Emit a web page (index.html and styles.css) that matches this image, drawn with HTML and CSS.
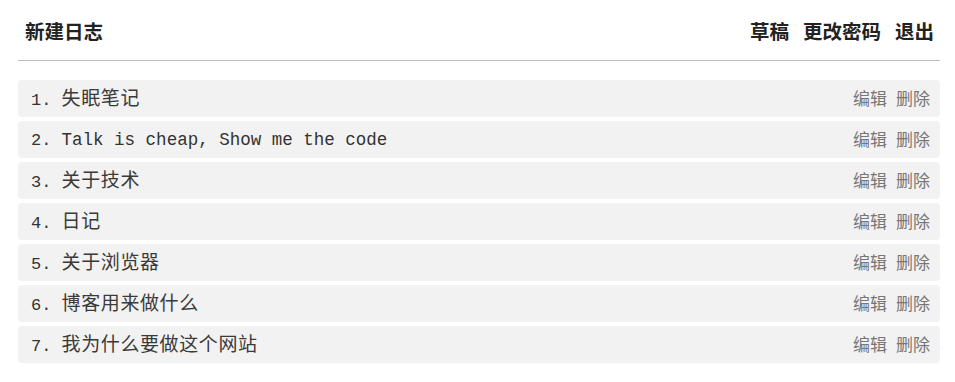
FILE: index.html
```html
<!DOCTYPE html>
<html lang="zh-CN">
<head>
<meta charset="utf-8">
<title>日志</title>
<link rel="stylesheet" href="styles.css">
</head>
<body>
<div class="page">
  <header class="top">
    <a class="top-link">新建日志</a>
    <nav class="top-nav">
      <a class="top-link">草稿</a>
      <a class="top-link">更改密码</a>
      <a class="top-link">退出</a>
    </nav>
  </header>
  <ul class="list">
    <li class="row"><span class="title"><span class="num">1. </span><span class="cn">失眠笔记</span></span><span class="ops"><a>编辑</a><a>删除</a></span></li>
    <li class="row"><span class="title"><span class="num">2. </span><span class="mono">Talk is cheap, Show me the code</span></span><span class="ops"><a>编辑</a><a>删除</a></span></li>
    <li class="row"><span class="title"><span class="num">3. </span><span class="cn">关于技术</span></span><span class="ops"><a>编辑</a><a>删除</a></span></li>
    <li class="row"><span class="title"><span class="num">4. </span><span class="cn">日记</span></span><span class="ops"><a>编辑</a><a>删除</a></span></li>
    <li class="row"><span class="title"><span class="num">5. </span><span class="cn">关于浏览器</span></span><span class="ops"><a>编辑</a><a>删除</a></span></li>
    <li class="row"><span class="title"><span class="num">6. </span><span class="cn">博客用来做什么</span></span><span class="ops"><a>编辑</a><a>删除</a></span></li>
    <li class="row"><span class="title"><span class="num">7. </span><span class="cn">我为什么要做这个网站</span></span><span class="ops"><a>编辑</a><a>删除</a></span></li>
  </ul>
</div>
</body>
</html>
```
FILE: styles.css
```css
html, body {
  margin: 0;
  padding: 0;
  background: #fff;
}
body {
  font-family: "Noto Sans CJK SC", sans-serif;
  color: #333;
}
.page {
  width: 922px;
  margin-left: 18px;
}
.top {
  height: 61px;
  box-sizing: border-box;
  padding: 2px 6px 0 7px;
  display: flex;
  align-items: center;
  justify-content: space-between;
  border-bottom: 1px solid #bdbdbd;
}
.top-link {
  font-size: 19.5px;
  font-weight: 700;
  color: #222;
  line-height: 1;
}
.top-nav {
  display: flex;
  gap: 14px;
}
.list {
  list-style: none;
  margin: 19px 0 0 0;
  padding: 0;
  display: flex;
  flex-direction: column;
  gap: 4px;
}
.row {
  height: 37px;
  box-sizing: border-box;
  background: #f2f2f2;
  border-radius: 4px;
  padding: 0 10px 3px 13px;
  display: flex;
  align-items: center;
  justify-content: space-between;
}
.title {
  display: block;
  white-space: pre;
  line-height: 28px;
  height: 28px;
}
.num {
  font-family: "Liberation Mono", monospace;
  font-size: 17px;
  color: #333;
}
.mono {
  font-family: "Liberation Mono", monospace;
  font-size: 17.5px;
  color: #333;
}
.cn {
  font-family: "Noto Sans CJK SC", sans-serif;
  font-size: 19px;
  color: #3a3a3a;
  letter-spacing: 0.6px;
}
.ops {
  display: flex;
  gap: 9px;
}
.ops a {
  font-size: 17px;
  color: #777;
  line-height: 1;
}
```
